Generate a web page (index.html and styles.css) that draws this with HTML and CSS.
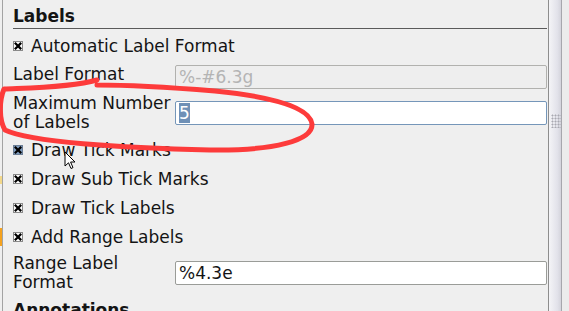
FILE: index.html
```html
<!DOCTYPE html>
<html lang="en">
<head>
  <meta charset="UTF-8">
  <title>Labels</title>
  <link rel="stylesheet" href="styles.css">
</head>
<body>
  <div class="window">
    <!-- left window edge -->
    <div class="edge"></div>

    <!-- property panel -->
    <div class="panel">
      <h2 class="section-title">Labels</h2>

      <div class="check-row first">
        <svg class="check" width="10" height="10" viewBox="0 0 10 10"><rect x="0.5" y="0.5" width="9" height="9"/><path d="M2.6 2.6 L7.4 7.4 M7.4 2.6 L2.6 7.4"/></svg>
        Automatic Label Format
      </div>

      <div class="field-row short">
        <span class="field-label">Label Format</span>
        <div class="text-input disabled">%-#6.3g</div>
      </div>

      <div class="field-row tall">
        <span class="field-label">Maximum Number of Labels</span>
        <div class="text-input focused"><span class="selected">5</span></div>
      </div>

      <div class="check-group">
        <div class="check-row">
          <svg class="check hover" width="10" height="10" viewBox="0 0 10 10"><rect x="0.5" y="0.5" width="9" height="9"/><path d="M2.6 2.6 L7.4 7.4 M7.4 2.6 L2.6 7.4"/></svg>
          Draw Tick Marks
        </div>
        <div class="check-row">
          <svg class="check" width="10" height="10" viewBox="0 0 10 10"><rect x="0.5" y="0.5" width="9" height="9"/><path d="M2.6 2.6 L7.4 7.4 M7.4 2.6 L2.6 7.4"/></svg>
          Draw Sub Tick Marks
        </div>
        <div class="check-row">
          <svg class="check" width="10" height="10" viewBox="0 0 10 10"><rect x="0.5" y="0.5" width="9" height="9"/><path d="M2.6 2.6 L7.4 7.4 M7.4 2.6 L2.6 7.4"/></svg>
          Draw Tick Labels
        </div>
        <div class="check-row">
          <svg class="check" width="10" height="10" viewBox="0 0 10 10"><rect x="0.5" y="0.5" width="9" height="9"/><path d="M2.6 2.6 L7.4 7.4 M7.4 2.6 L2.6 7.4"/></svg>
          Add Range Labels
        </div>
      </div>

      <div class="field-row range">
        <span class="field-label">Range Label Format</span>
        <div class="text-input">%4.3e</div>
      </div>

      <h2 class="section-title next">Annotations</h2>
    </div>

    <!-- scrollbar -->
    <div class="scrollbar">
      <div class="slider">
        <div class="grip"></div>
      </div>
    </div>

    <!-- hand drawn red mark -->
    <svg class="scribble" width="320" height="160" viewBox="0 0 320 160">
      <path d="M97 80 C 70 88, 25 88, 4 89 C -1 101, -1 120, 5 130 C 30 142, 120 148, 210 150 C 275 151, 313 140, 312 124 C 310 108, 275 97, 215 91 C 165 87, 125 85, 97 85"
            fill="none" stroke="#fd3b3b" stroke-width="5" stroke-linecap="round" stroke-linejoin="round"/>
    </svg>

    <!-- mouse pointer -->
    <svg class="pointer" width="14" height="20" viewBox="0 0 14 20">
      <path d="M1 1 L1 15 L4.5 11.8 L7 17.5 L9 16.6 L6.6 11 L11 11 Z" fill="#fff" stroke="#000" stroke-width="1" stroke-linejoin="round"/>
    </svg>
  </div>
</body>
</html>
```

FILE: styles.css
```css
/* page */
body {
  margin: 0;
  background: #efefef;
  font-family: 'DejaVu Sans', 'Liberation Sans', sans-serif;
  font-size: 17px;
  color: #141414;
  overflow: hidden;
}

.window {
  position: relative;
  display: flex;
  width: 569px;
  height: 311px;
  overflow: hidden;
}

/* left edge of the window behind */
.edge {
  width: 2px;
  flex: none;
  border-right: 1px solid #a3a3a3;
  background: linear-gradient(to bottom,
    #efefef 0, #efefef 176px,
    #f3d88a 176px, #f3d88a 184px,
    #efefef 184px, #efefef 228px,
    #f5a21e 228px, #f5a21e 246px,
    #efefef 246px);
}

/* panel */
.panel {
  flex: 1;
  padding: 0 1px 0 10px;
}

.section-title {
  margin: 0;
  padding: 6px 0 2px;
  font-size: 17px;
  line-height: 20px;
  font-weight: bold;
  border-bottom: 1px solid #5a5a5a;
}

.section-title.next {
  padding-top: 5px;
  border-bottom: none;
}

/* checkbox rows */
.check-row {
  display: flex;
  align-items: center;
  gap: 8px;
  height: 29px;
  white-space: nowrap;
}

.check-row.first {
  height: 28px;
  margin-top: 3px;
}

.check-group {
  margin-top: 3px;
}

.check {
  flex: none;
}

.check rect {
  fill: #fff;
  stroke: #8a8a8a;
  stroke-width: 1;
}

.check path {
  stroke: #000;
  stroke-width: 2.2;
  stroke-linecap: square;
}

.check.hover rect {
  fill: #7f9dbf;
  stroke: #6c7f96;
}

/* label + input rows */
.field-row {
  display: grid;
  grid-template-columns: 162px 1fr;
  align-items: center;
}

.field-row.short {
  height: 34px;
}

.field-row.short .field-label {
  margin-bottom: 6px;
}

.field-row.tall {
  height: 38px;
}

.field-row.range {
  height: 44px;
}

.field-label {
  line-height: 19px;
}

.text-input {
  height: 22px;
  line-height: 22px;
  padding: 0 3px;
  border: 1px solid #9a9c98;
  border-radius: 2px;
  background: #fff;
  white-space: nowrap;
}

.text-input.disabled {
  background: #eeeeee;
  border-color: #b1b1ae;
  color: #b4b4b4;
}

.text-input.focused {
  border-color: #7596b9;
}

.selected {
  background: #6f90b6;
  color: #fff;
}

/* scrollbar */
.scrollbar {
  width: 20px;
  flex: none;
  border-left: 1px solid #8d8d8d;
  background: #ececec;
}

.slider {
  width: 13px;
  height: 100%;
  border-right: 1px solid #a7a7ad;
  background: linear-gradient(to right, #f4f4f7, #e2e2ea 70%, #d4d4dc);
  padding-top: 114px;
  box-sizing: border-box;
}

.grip {
  width: 10px;
  height: 14px;
  margin-left: 2px;
  background-image: radial-gradient(circle, #a9a9b2 0.8px, transparent 1.2px);
  background-size: 3px 3px;
}

/* overlays */
.scribble {
  position: absolute;
  left: 0;
  top: 0;
}

.pointer {
  position: absolute;
  left: 64px;
  top: 151px;
}
```
